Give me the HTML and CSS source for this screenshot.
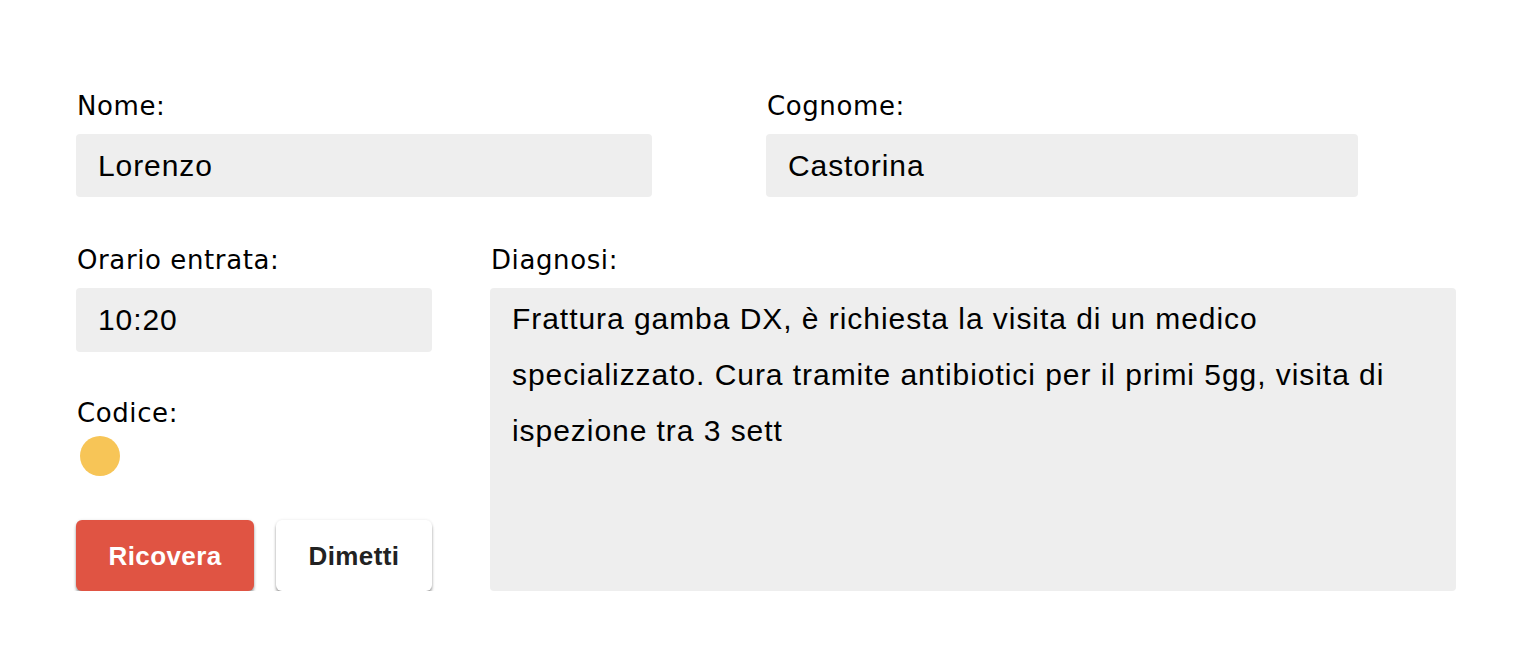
FILE: index.html
```html
<!DOCTYPE html>
<html>
<head>
<title>Scheda paziente</title>
<link rel="stylesheet" href="styles.css">
</head>
<body>

<div class="patient-form">
  <div class="form-row top-row">
    <div class="field field-name">
      <label class="field-label">Nome:</label>
      <div class="field-box">Lorenzo</div>
    </div>
    <div class="field field-surname">
      <label class="field-label">Cognome:</label>
      <div class="field-box">Castorina</div>
    </div>
  </div>

  <div class="form-row bottom-row">
    <div class="side-column">
      <div class="field">
        <label class="field-label">Orario entrata:</label>
        <div class="field-box">10:20</div>
      </div>

      <div class="field code-field">
        <label class="field-label">Codice:</label>
        <span class="code-dot"></span>
      </div>

      <div class="button-row">
        <button class="btn btn-primary">Ricovera</button>
        <button class="btn btn-light">Dimetti</button>
      </div>
    </div>

    <div class="field diagnosis-field">
      <label class="field-label">Diagnosi:</label>
      <div class="diagnosis-box">Frattura gamba DX, è richiesta la visita di un medico specializzato. Cura tramite antibiotici per il primi 5gg, visita di ispezione tra 3 sett</div>
    </div>
  </div>
</div>

</body>
</html>
```

FILE: styles.css
```css
body {
  margin: 0;
  background: #ffffff;
  color: #000000;
}

.patient-form {
  padding: 90px 0 0 76px;
}

.form-row {
  display: flex;
}

.top-row {
  gap: 114px;
  margin-bottom: 47px;
}

.field {
  display: flex;
  flex-direction: column;
}

.field-name {
  width: 576px;
}

.field-surname {
  width: 592px;
}

.field-label {
  box-sizing: border-box;
  font-family: "DejaVu Sans", "Noto Sans", sans-serif;
  font-size: 26px;
  line-height: 30px;
  height: 30px;
  margin-bottom: 14px;
  padding: 1px 0 0 1px;
  letter-spacing: 0.6px;
}

.field-box {
  height: 63px;
  padding: 0 22px;
  background: #eeeeee;
  border-radius: 4px;
  font-family: "Liberation Sans", Arial, sans-serif;
  font-size: 30px;
  line-height: 63px;
  letter-spacing: 0.9px;
}

.bottom-row {
  gap: 58px;
}

.side-column {
  width: 356px;
  display: flex;
  flex-direction: column;
}

.side-column .field-box {
  height: 64px;
  line-height: 64px;
}

.code-field {
  margin-top: 45px;
}

.code-field .field-label {
  margin-bottom: 9px;
}

.code-dot {
  display: block;
  width: 40px;
  height: 40px;
  margin-left: 4px;
  border-radius: 50%;
  background: #f7c557;
}

.button-row {
  display: flex;
  gap: 22px;
  margin-top: 44px;
}

.btn {
  height: 71px;
  padding: 2px 0 0;
  border: none;
  border-radius: 6px;
  font-family: "Liberation Sans", Arial, sans-serif;
  font-size: 26px;
  font-weight: bold;
  letter-spacing: 0.4px;
  box-shadow: 0 3px 3px rgba(0, 0, 0, 0.35), 0 0 3px rgba(0, 0, 0, 0.1);
  cursor: pointer;
}

.btn-primary {
  width: 178px;
  background: #e05443;
  color: #ffffff;
}

.btn-light {
  width: 156px;
  background: #ffffff;
  color: #222222;
}

.diagnosis-field {
  width: 966px;
}

.diagnosis-box {
  height: 303px;
  box-sizing: border-box;
  padding: 3px 22px;
  background: #eeeeee;
  border-radius: 4px;
  font-family: "Liberation Sans", Arial, sans-serif;
  font-size: 30px;
  line-height: 56px;
  letter-spacing: 0.95px;
}
```
